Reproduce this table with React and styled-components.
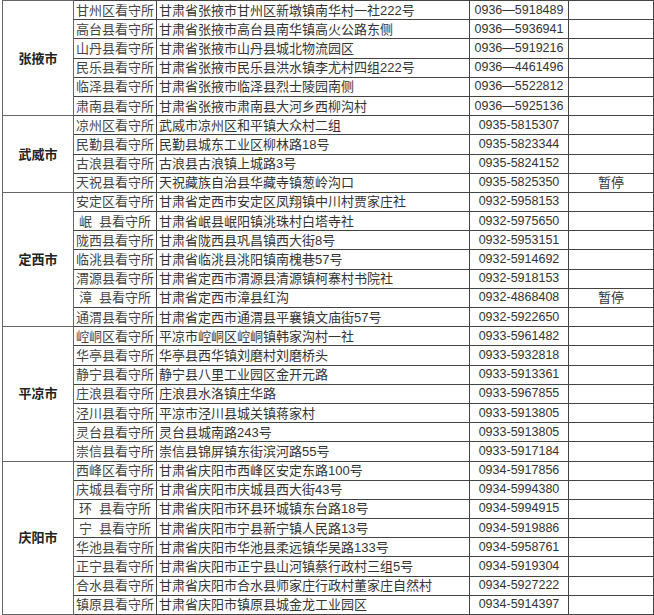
import React from "react";
import styled, { createGlobalStyle } from "styled-components";

const GlobalStyle = createGlobalStyle`
    html, body {
        margin: 0;
        padding: 0;
        background: #fff;
    }
    body {
        font-family: "Liberation Sans", "Noto Sans CJK SC", sans-serif;
        color: #333;
    }
`;

// column widths in px: city, name, address, phone, note
const widths = [71, 83, 313, 99, 85];

const groups = [
    {
        city: "张掖市",
        rows: [
            ["甘州区看守所", "甘肃省张掖市甘州区新墩镇南华村一社222号", "0936—5918489", ""],
            ["高台县看守所", "甘肃省张掖市高台县南华镇高火公路东侧", "0936—5936941", ""],
            ["山丹县看守所", "甘肃省张掖市山丹县城北物流园区", "0936—5919216", ""],
            ["民乐县看守所", "甘肃省张掖市民乐县洪水镇李尤村四组222号", "0936—4461496", ""],
            ["临泽县看守所", "甘肃省张掖市临泽县烈士陵园南侧", "0936—5522812", ""],
            ["肃南县看守所", "甘肃省张掖市肃南县大河乡西柳沟村", "0936—5925136", ""],
        ],
    },
    {
        city: "武威市",
        rows: [
            ["凉州区看守所", "武威市凉州区和平镇大众村二组", "0935-5815307", ""],
            ["民勤县看守所", "民勤县城东工业区柳林路18号", "0935-5823344", ""],
            ["古浪县看守所", "古浪县古浪镇上城路3号", "0935-5824152", ""],
            ["天祝县看守所", "天祝藏族自治县华藏寺镇葱岭沟口", "0935-5825350", "暂停"],
        ],
    },
    {
        city: "定西市",
        rows: [
            ["安定区看守所", "甘肃省定西市安定区凤翔镇中川村贾家庄社", "0932-5958153", ""],
            ["岷  县看守所", "甘肃省岷县岷阳镇洮珠村白塔寺社", "0932-5975650", ""],
            ["陇西县看守所", "甘肃省陇西县巩昌镇西大街8号", "0932-5953151", ""],
            ["临洮县看守所", "甘肃省临洮县洮阳镇南槐巷57号", "0932-5914692", ""],
            ["渭源县看守所", "甘肃省定西市渭源县清源镇柯寨村书院社", "0932-5918153", ""],
            ["漳  县看守所", "甘肃省定西市漳县红沟", "0932-4868408", "暂停"],
            ["通渭县看守所", "甘肃省定西市通渭县平襄镇文庙街57号", "0932-5922650", ""],
        ],
    },
    {
        city: "平凉市",
        rows: [
            ["崆峒区看守所", "平凉市崆峒区崆峒镇韩家沟村一社", "0933-5961482", ""],
            ["华亭县看守所", "华亭县西华镇刘磨村刘磨桥头", "0933-5932818", ""],
            ["静宁县看守所", "静宁县八里工业园区金开元路", "0933-5913361", ""],
            ["庄浪县看守所", "庄浪县水洛镇庄华路", "0933-5967855", ""],
            ["泾川县看守所", "平凉市泾川县城关镇蒋家村", "0933-5913805", ""],
            ["灵台县看守所", "灵台县城南路243号", "0933-5913805", ""],
            ["崇信县看守所", "崇信县锦屏镇东街滨河路55号", "0933-5917184", ""],
        ],
    },
    {
        city: "庆阳市",
        rows: [
            ["西峰区看守所", "甘肃省庆阳市西峰区安定东路100号", "0934-5917856", ""],
            ["庆城县看守所", "甘肃省庆阳市庆城县西大街43号", "0934-5994380", ""],
            ["环  县看守所", "甘肃省庆阳市环县环城镇东台路18号", "0934-5994915", ""],
            ["宁  县看守所", "甘肃省庆阳市宁县新宁镇人民路13号", "0934-5919886", ""],
            ["华池县看守所", "甘肃省庆阳市华池县柔远镇华吴路133号", "0934-5958761", ""],
            ["正宁县看守所", "甘肃省庆阳市正宁县山河镇蔡行政村三组5号", "0934-5919304", ""],
            ["合水县看守所", "甘肃省庆阳市合水县师家庄行政村董家庄自然村", "0934-5927222", ""],
            ["镇原县看守所", "甘肃省庆阳市镇原县城金龙工业园区", "0934-5914397", ""],
        ],
    },
];

const Page = styled.div`
    padding-left: 2px;
`;

const Table = styled.table`
    border-collapse: collapse;
    table-layout: fixed;
    width: 651px;
    font-size: 13px;
    line-height: 17px;
`;

const Col = styled.col`
    width: ${props => props.$w}px;
`;

const Row = styled.tr`
    height: 19.2px;
`;

const Cell = styled.td`
    border: 1px solid #444;
    padding: 0 2px;
    white-space: pre;
    overflow: hidden;
    vertical-align: middle;
`;

const CityCell = styled(Cell)`
    text-align: center;
    font-weight: bold;
    color: #222;
    border-color: #666;
`;

const NameCell = styled(Cell)`
    text-align: center;
    padding: 0;
    color: #444;
`;

const AddrCell = styled(Cell)`
    text-align: left;
    color: #333;
`;

const PhoneCell = styled(Cell)`
    text-align: center;
    font-size: 12.5px;
    color: #333;
`;

const NoteCell = styled(Cell)`
    text-align: center;
    color: #333;
`;

export default function App() {
    return (
        <Page>
            <GlobalStyle />
            <Table>
                <colgroup>
                    {widths.map((w, i) => <Col key={i} $w={w} />)}
                </colgroup>
                <tbody>
                    {groups.map((g) =>
                        g.rows.map(([name, addr, phone, note], i) => (
                            <Row key={g.city + i}>
                                {i === 0 && <CityCell rowSpan={g.rows.length}>{g.city}</CityCell>}
                                <NameCell>{name}</NameCell>
                                <AddrCell>{addr}</AddrCell>
                                <PhoneCell>{phone}</PhoneCell>
                                <NoteCell>{note}</NoteCell>
                            </Row>
                        ))
                    )}
                </tbody>
            </Table>
        </Page>
    );
}
